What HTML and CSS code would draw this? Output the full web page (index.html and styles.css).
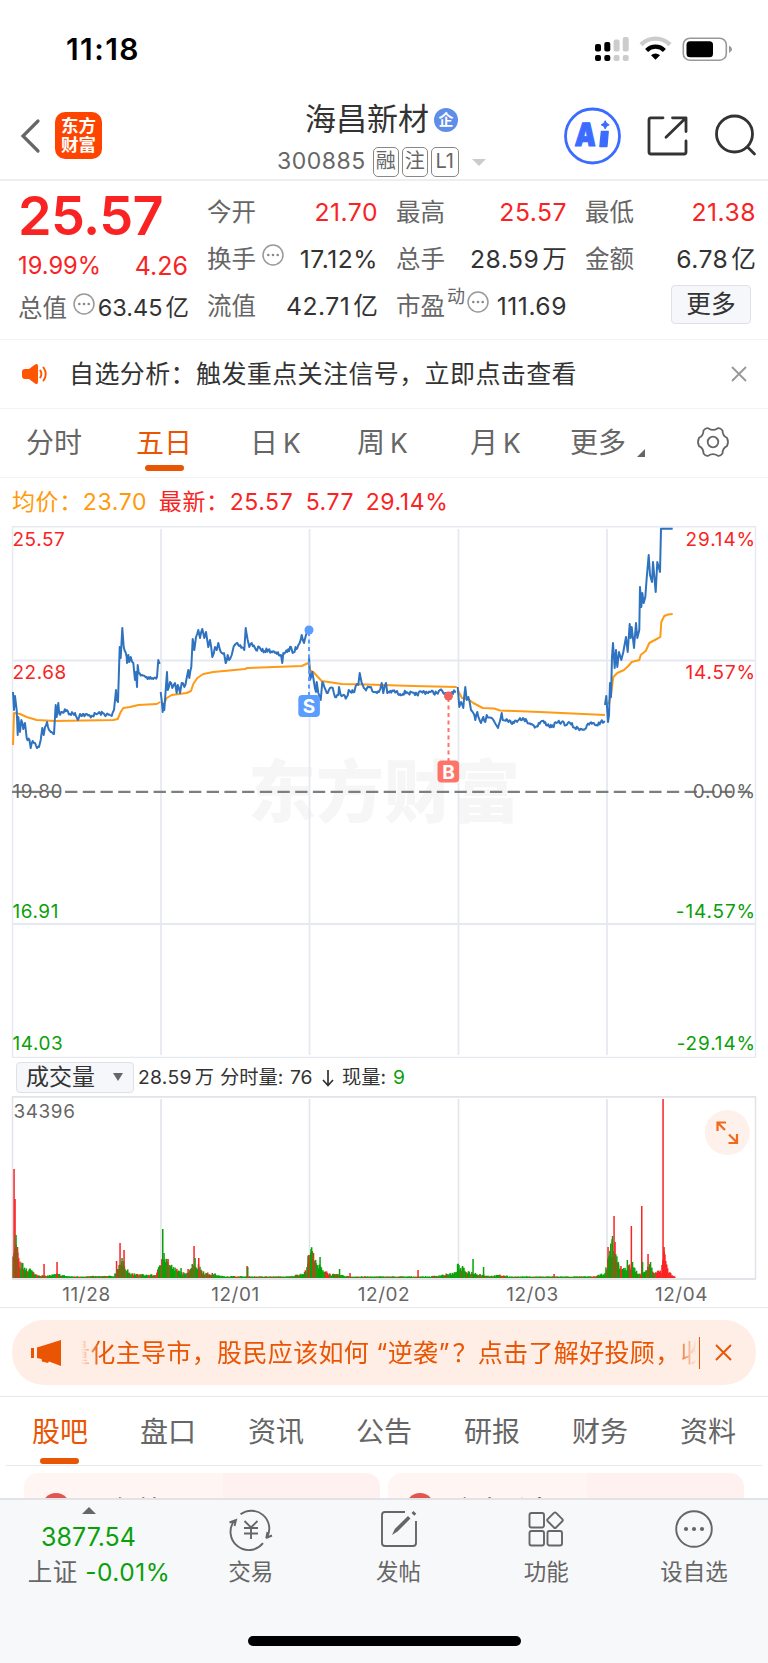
FILE: index.html
```html
<!DOCTYPE html>
<html lang="zh-CN">
<head>
  <meta charset="UTF-8">
  <title>海昌新材 300885</title>
  <link rel="stylesheet" href="styles.css">
</head>
<body>

  <div class="status">
    <span class="time">11:18</span>
    <svg class="status-icons" width="140" height="30" viewBox="0 0 140 30">
      <g fill="#000">
        <rect x="0" y="9" width="6" height="7.5" rx="2"/>
        <rect x="9.3" y="7" width="6" height="9.5" rx="2"/>
        <rect x="0" y="20" width="6" height="6" rx="2"/>
        <rect x="9.3" y="20" width="6" height="6" rx="2"/>
      </g>
      <g fill="#ccc">
        <rect x="18.6" y="4.5" width="6" height="12" rx="2"/>
        <rect x="27.7" y="2" width="6" height="14.5" rx="2"/>
        <rect x="18.6" y="20" width="6" height="6" rx="2"/>
        <rect x="27.7" y="20" width="6" height="6" rx="2"/>
      </g>
      <path d="M46 9.6 A20.5 20.5 0 0 1 75 9.6" fill="none" stroke="#ccc" stroke-width="4.4"/>
      <path d="M51.6 15.4 A12.6 12.6 0 0 1 69.4 15.4" fill="none" stroke="#000" stroke-width="4.2"/>
      <path d="M60.5 24.8 L56 20.2 A6.6 6.6 0 0 1 65 20.2 Z" fill="#000"/>
      <rect x="88.3" y="3.2" width="43" height="22" rx="6.5" fill="none" stroke="#999" stroke-width="1.6"/>
      <rect x="91.5" y="6.2" width="26.5" height="16" rx="3.5" fill="#000"/>
      <path d="M134 10.5 Q137 12 137 14.3 Q137 16.6 134 18 Z" fill="#999"/>
    </svg>
  </div>

  <header class="header">
    <svg class="back" width="22" height="36" viewBox="0 0 22 36"><path d="M18 3 L3 18 L18 33" fill="none" stroke="#666" stroke-width="3.2" stroke-linecap="round"/></svg>
    <div class="logo">东方<br>财富</div>
    <div class="stock">
      <div class="stock-name">海昌新材<span class="badge">企</span></div>
      <div class="stock-code">300885<span class="tag first">融</span><span class="tag">注</span><span class="tag l1">L1</span><i class="drop"></i></div>
    </div>
    <svg class="header-icons" width="194" height="58" viewBox="0 0 194 58">
      <circle cx="28.5" cy="29" r="27" fill="none" stroke="#3b6cff" stroke-width="2.8"/>
      <text class="ai" x="12.5" y="38.8" textLength="21" lengthAdjust="spacingAndGlyphs" transform="skewX(-3)">A</text>
      <path d="M37.4 24.5 h6.8 l-1.3 15 h-7 z" fill="#3b6cff" stroke="#3b6cff" stroke-width="1.4" stroke-linejoin="round"/>
      <path d="M41.2 13.7 Q42 17 45.2 17.8 Q42 18.6 41.2 21.9 Q40.4 18.6 37.2 17.8 Q40.4 17 41.2 13.7 Z" fill="#3b6cff" stroke="#3b6cff"/>
      <g fill="none" stroke="#333" stroke-width="2.8" stroke-linecap="round" stroke-linejoin="round">
        <path d="M99 10.8 H87 Q85 10.8 85 12.8 V45 Q85 47 87 47 H120 Q122 47 122 45 V34"/>
        <path d="M108.5 10.8 H122 V24.5 M121.5 11.3 L102 30.3"/>
        <circle cx="170.5" cy="27" r="18"/>
        <path d="M183.500 40 L190.500 47"/>
      </g>
    </svg>
  </header>

  <section class="quote">
    <div class="quote-main">
      <div class="price">25.57</div>
      <div class="change"><span>19.99%</span><span class="diff">4.26</span></div>
      <div class="cell total"><label>总值</label><svg class="tip" width="22" height="22" viewBox="0 0 22 22"><use href="#tip"/></svg><b>63.45<u>亿</u></b></div>
    </div>
    <div class="quote-col">
      <div class="cell"><label>今开</label><b class="up">21.70</b></div>
      <div class="cell"><label>换手</label><svg class="tip" width="22" height="22" viewBox="0 0 22 22"><use href="#tip"/></svg><b>17.12%</b></div>
      <div class="cell"><label>流值</label><b>42.71<u>亿</u></b></div>
    </div>
    <div class="quote-col">
      <div class="cell"><label>最高</label><b class="up">25.57</b></div>
      <div class="cell"><label>总手</label><b>28.59<u>万</u></b></div>
      <div class="cell"><label>市盈</label><sup>动</sup><svg class="tip near" width="22" height="22" viewBox="0 0 22 22"><use href="#tip"/></svg><b>111.69</b></div>
    </div>
    <div class="quote-col">
      <div class="cell"><label>最低</label><b class="up">21.38</b></div>
      <div class="cell"><label>金额</label><b>6.78<u>亿</u></b></div>
      <div class="cell"><button class="more">更多</button></div>
    </div>
  </section>

  <svg class="defs" width="0" height="0">
    <symbol id="tip" viewBox="0 0 22 22">
      <circle cx="11" cy="11" r="10" fill="none" stroke="#999" stroke-width="1.5"/>
      <circle cx="6.3" cy="11" r="1.3" fill="#888"/><circle cx="11" cy="11" r="1.3" fill="#888"/><circle cx="15.7" cy="11" r="1.3" fill="#888"/>
    </symbol>
  </svg>

  <div class="notice">
    <svg width="26" height="22" viewBox="0 0 26 22">
      <path d="M3 6 H7 L13 1.5 Q16 0 16 3 V19 Q16 22 13 20.5 L7 16 H3 Q0 16 0 13 V9 Q0 6 3 6 Z" fill="#ff5500"/>
      <path d="M18.3 7.5 Q20.5 11 18.3 14.5 M21.5 4.5 Q26 11 21.5 17.5" fill="none" stroke="#ff5500" stroke-width="1.9" stroke-linecap="round"/>
    </svg>
    <p>自选分析：触发重点关注信号，立即点击查看</p>
    <svg width="16" height="16" viewBox="0 0 16 16"><path d="M1 1 L15 15 M15 1 L1 15" stroke="#999" stroke-width="1.9"/></svg>
  </div>

  <nav class="periods">
    <span>分时</span>
    <span class="active">五日</span>
    <span>日<em>K</em></span>
    <span>周<em>K</em></span>
    <span>月<em>K</em></span>
    <span>更多</span>
    <svg class="corner" width="8" height="8" viewBox="0 0 8 8"><path d="M8 0 V8 H0 Z" fill="#666"/></svg>
    <svg class="gear" width="34" height="32" viewBox="-17 -16 34 32" fill="none" stroke="#666" stroke-width="1.8" stroke-linejoin="round">
      <path d="M-9.5 -11.5 Q-7 -14.8 -4.5 -13.6 Q0 -10.8 4.5 -13.6 Q7 -14.8 9.5 -11.5 Q9.6 -6 14 -4.2 Q16 0 14 4.2 Q9.6 6 9.5 11.5 Q7 14.8 4.5 13.6 Q0 10.8 -4.5 13.6 Q-7 14.8 -9.5 11.5 Q-9.6 6 -14 4.2 Q-16 0 -14 -4.2 Q-9.6 -6 -9.5 -11.5 Z"/>
      <circle r="5.3"/>
    </svg>
  </nav>

  <div class="info">
    <span class="avg">均价：</span><span class="avg n1">23.70</span><span>最新：</span><span class="n2">25.57</span><span class="n3">5.77</span><span>29.14%</span>
  </div>

  <svg class="chart" width="768" height="532" viewBox="0 0 768 532">
    <text class="watermark" x="248" y="291" textLength="272">东方财富</text>
    <g fill="none" stroke="#e6e9f0" stroke-width="1.8">
      <path d="M12.5 0.8 H755.5 V531.5 H12.5 Z" stroke-width="1.5"/>
      <path d="M13 134.5 H755 M13 398 H755 M161 3 V529 M309.5 3 V529 M458.5 3 V529 M607 3 V529"/>
    </g>
    <path d="M12 265.8 H755" stroke="#7c807c" stroke-width="2.2" stroke-dasharray="12.3 5.4"/>
    <g class="lines" id="lines"></g>
    <path d="M309 106 V170" stroke="#5a9dff" stroke-width="2" stroke-dasharray="4 3.5"/>
    <circle cx="309" cy="104" r="4.5" fill="#5a9dff"/>
    <rect x="298.3" y="169" width="21.6" height="22" rx="4" fill="#5a9dff"/>
    <text class="mark" x="309.1" y="187">S</text>
    <path d="M448.5 172 V235" stroke="#ff7468" stroke-width="2" stroke-dasharray="4 3.5"/>
    <circle cx="448.5" cy="170" r="4.5" fill="#f2625c"/>
    <rect x="437.5" y="234.5" width="21.6" height="22" rx="4" fill="#ff7468"/>
    <text class="mark" x="448.5" y="252.5">B</text>
    <g class="axis">
      <text class="up" x="12.5" y="20">25.57</text>
      <text class="up" x="12.5" y="152.5">22.68</text>
      <text x="12.5" y="272">19.80</text>
      <text class="down" x="12.5" y="392">16.91</text>
      <text class="down" x="12.5" y="524">14.03</text>
      <g class="right" text-anchor="end">
        <text class="up" x="756" y="20">29.14%</text>
        <text class="up" x="756" y="152.5">14.57%</text>
        <text x="756" y="272">0.00%</text>
        <text class="down" x="756" y="392">-14.57%</text>
        <text class="down" x="756" y="524">-29.14%</text>
      </g>
    </g>
  </svg>

  <div class="volume-info">
    <div class="select">成交量<i></i></div>
    <span class="v1">28.59<u>万</u></span><span class="v2">分时量:</span><span class="v3">76</span>
    <svg width="12" height="18" viewBox="0 0 12 18"><path d="M6 1 V16 M1 11 L6 16.5 L11 11" fill="none" stroke="#333" stroke-width="1.7"/></svg>
    <span class="v4">现量:</span><span class="down">9</span>
  </div>

  <svg class="volume" width="768" height="211" viewBox="0 0 768 211">
    <g fill="none" stroke="#e2e4ea" stroke-width="1.6">
      <path d="M12.5 0 V183 M755.5 0 V183 M161 3 V183 M309.5 3 V183 M458.5 3 V183 M607 3 V183"/>
      <path d="M12 0.8 H756 M12 183 H756" stroke-width="2"/>
    </g>
    <g id="bars"></g>
    <circle cx="727.3" cy="36.5" r="22.5" fill="#fef0ea"/>
    <path d="M717.5 35 V26.5 H726 M718 27 L725 34 M729 38.5 L736.5 46 M728.5 47 H737 V38" fill="none" stroke="#f06a1e" stroke-width="2.2"/>
    <g class="axis">
      <text x="13.5" y="21.5">34396</text>
      <g text-anchor="middle">
        <text x="86.5" y="204.5">11/28</text>
        <text x="235.5" y="204.5">12/01</text>
        <text x="384" y="204.5">12/02</text>
        <text x="532.5" y="204.5">12/03</text>
        <text x="681.5" y="204.5">12/04</text>
      </g>
    </g>
  </svg>

  <div class="banner-wrap">
    <div class="banner">
      <svg width="30" height="26" viewBox="0 0 30 26"><path d="M0 8 H3 V18 H0 Z M6 7.5 L30 0 V26 L18 21.5 L17 23 L11 21.5 L10.5 19 L6 18 Z" fill="#ea5504"/></svg>
      <div class="marquee"><p>量化主导市，股民应该如何<q class="open">“</q>逆袭<q>”</q>？点击了解好投顾，收益</p></div>
      <svg class="close" width="17" height="17" viewBox="0 0 17 17"><path d="M1 1 L16 16 M16 1 L1 16" stroke="#ea5504" stroke-width="1.9"/></svg>
    </div>
  </div>

  <nav class="tabs">
    <span class="active">股吧</span><span>盘口</span><span>资讯</span><span>公告</span><span>研报</span><span>财务</span><span>资料</span>
  </nav>

  <div class="cards">
    <div class="card"><i class="dot"></i><b>人气榜</b></div>
    <div class="card"><i class="dot"></i><b>今十看盘</b></div>
  </div>

  <footer class="bottom">
    <div class="index">
      <svg width="14" height="7" viewBox="0 0 14 7"><path d="M7 0 L14 7 H0 Z" fill="#666"/></svg>
      <div class="index-value">3877.54</div>
      <div class="index-name">上证 <span class="down">-0.01%</span></div>
    </div>
    <div class="item">
      <svg width="44" height="40" viewBox="-22 -20 44 40" fill="none" stroke="#666" stroke-width="1.9">
        <path d="M-10.5 -14.7 A18 18 0 0 1 16 8.5 M15.2 9.2 L16.5 3 M15 9 L21 6.5 M12 14.2 A18 18 0 0 1 -16.5 -8.5 M-21.5 -6.5 L-15 -9 L-16.5 -3"/>
        <path d="M-6.5 -8 L0 -1.5 L6.5 -8 M0 -1.5 V10 M-7 -1 H7 M-7 4.5 H7"/>
      </svg>
      交易
    </div>
    <div class="item">
      <svg width="44" height="40" viewBox="-22 -20 44 40" fill="none" stroke="#666" stroke-width="1.9">
        <path d="M6 -17 H-14 Q-17 -17 -17 -14 V14 Q-17 17 -14 17 H14 Q17 17 17 14 V-8"/>
        <path d="M-7 6 L-4.2 0 L9 -13 L11.5 -10.5 L-1.5 2.5 Z M12.5 -16 L14.5 -18 L17.3 -15.3 L15.3 -13.3 Z" fill="#666" stroke="none"/>
      </svg>
      发帖
    </div>
    <div class="item">
      <svg width="44" height="40" viewBox="-22 -20 44 40" fill="none" stroke="#666" stroke-width="1.9">
        <rect x="-16.5" y="-16" width="14.5" height="14.5" rx="2"/>
        <rect x="-16.5" y="2" width="14.5" height="14.5" rx="2"/>
        <rect x="1.5" y="2" width="14.5" height="14.5" rx="2"/>
        <rect x="3.1" y="-14.7" width="11.8" height="11.8" rx="1.5" transform="rotate(45 9 -8.8)"/>
      </svg>
      功能
    </div>
    <div class="item">
      <svg width="44" height="40" viewBox="-22 -20 44 40" fill="none" stroke="#666" stroke-width="1.9">
        <circle r="17.8"/>
        <g fill="#666" stroke="none"><circle cx="-8" r="2.1"/><circle r="2.1"/><circle cx="8" r="2.1"/></g>
      </svg>
      设自选
    </div>
    <div class="home"></div>
  </footer>

  <script src="chart.js"></script>
</body>
</html>
```
FILE: styles.css
```css
* {
  box-sizing: border-box;
}

body {
  margin: 0;
  width: 768px;
  height: 1663px;
  overflow: hidden;
  background-color: #fff;
  color: #333;
  font-family: Inter, "Noto Sans CJK SC", sans-serif;
  line-height: 1.3;
  display: flex;
  flex-direction: column;
}

body > * {
  flex: none;
}

svg {
  display: block;
  flex: none;
}

i, em {
  font-style: normal;
}

u {
  text-decoration: none;
}

.defs {
  height: 0;
}

.up {
  color: #fa2323;
  fill: #fa2323;
}

.down {
  color: #0aa00a;
  fill: #0aa00a;
}

/* status bar */
.status {
  height: 98px;
  padding: 1px 33px 0 66px;
  display: flex;
  justify-content: space-between;
  align-items: center;
}

.time {
  font-size: 30px;
  font-weight: 600;
  color: #000;
  letter-spacing: 1.4px;
}

.status-icons {
  margin-top: 1px;
}

/* header */
.header {
  height: 83px;
  border-bottom: 2px solid #eee;
  display: flex;
  padding-left: 20px;
}

.back {
  margin-top: 20px;
}

.logo {
  width: 47px;
  height: 47px;
  margin: 14px 0 0 13px;
  padding-top: 4px;
  border-radius: 10px;
  background-color: #ff4400;
  color: #fff;
  font-size: 17.5px;
  font-weight: 700;
  line-height: 19px;
  text-align: center;
}

.stock {
  width: 240px;
  margin-left: 175px;
}

.stock-name {
  display: flex;
  align-items: center;
  height: 43px;
  padding-left: 28px;
  font-size: 31px;
}

.badge {
  width: 24px;
  height: 24px;
  margin-left: 5px;
  border-radius: 50%;
  background-color: #5f8dea;
  color: #fff;
  font-size: 15px;
  font-weight: 700;
  line-height: 23px;
  text-align: center;
}

.stock-code {
  display: flex;
  align-items: center;
  height: 40px;
  margin-top: 1px;
  color: #666;
  font-size: 23px;
  letter-spacing: 0.5px;
}

.tag {
  width: 26px;
  height: 30px;
  margin-left: 3px;
  border: 1.5px solid #888;
  border-radius: 5px;
  font-size: 20px;
  line-height: 27px;
  letter-spacing: 0;
  text-align: center;
}

.tag.first {
  margin-left: 7px;
}

.tag.l1 {
  width: 28px;
}

.drop {
  margin-left: 13px;
  border: 7px solid transparent;
  border-top-color: #ccc;
  border-bottom: 0;
}

.header-icons {
  margin: 9px 0 0 47px;
}

.ai {
  fill: #3b6cff;
  stroke: #3b6cff;
  stroke-width: 1.2;
  stroke-linejoin: round;
  font-size: 32px;
  font-weight: 900;
}

/* quote */
.quote {
  display: grid;
  grid-template-columns: repeat(4, 170px);
  column-gap: 19px;
  height: 159px;
  padding: 7px 0 0 18px;
  border-bottom: 1.5px solid #f3f3f3;
}

.quote-col {
  padding-top: 1px;
}

.price {
  height: 54px;
  line-height: 55px;
  color: #fa2323;
  font-size: 54px;
  font-weight: 600;
  letter-spacing: -0.6px;
}

.change {
  display: flex;
  justify-content: space-between;
  height: 48px;
  line-height: 48px;
  color: #fa2323;
  font-size: 23.7px;
}

.diff {
  font-size: 25px;
}

.cell {
  display: flex;
  align-items: center;
  height: 47px;
  font-size: 24.7px;
  white-space: nowrap;
}

.cell.total {
  height: 37px;
}

.cell label {
  color: #666;
  font-size: 24.5px;
}

.cell b {
  margin-left: auto;
  margin-right: -1px;
  font-weight: 400;
  letter-spacing: 0.5px;
}

.cell.total b {
  font-size: 23.5px;
  letter-spacing: 0;
}

.cell u {
  margin-left: 3px;
  letter-spacing: 0;
}

.cell sup {
  margin: -20px 0 0 2px;
  font-size: 18px;
  color: #666;
}

.tip {
  margin: -10px 0 0 6px;
}

.tip.near {
  margin-left: 2px;
}

.more {
  width: 80px;
  height: 39px;
  margin: -4px 4px 0 auto;
  padding: 0;
  border: 1.5px solid #dfe1e6;
  border-radius: 4px;
  background-color: #f6f7fa;
  color: #333;
  font: inherit;
}

/* notice */
.notice {
  display: flex;
  align-items: center;
  height: 69px;
  padding: 0 21px 0 22px;
  border-bottom: 1.5px solid #f3f3f3;
}

.notice p {
  flex: 1;
  margin: 0 0 0 21px;
  font-size: 25px;
  letter-spacing: 0.4px;
}

/* period tabs */
.periods {
  display: grid;
  grid-template-columns: 110px 114px 107px 113px 100px 94px 77px 34px;
  height: 69px;
  padding-left: 26px;
  border-bottom: 1.5px solid #f3f3f3;
  color: #666;
  font-size: 28px;
  line-height: 68px;
}

.periods em {
  margin-left: 5px;
  font-size: 26.5px;
}

.periods .active {
  position: relative;
  color: #ea5504;
}

.periods .active::after,
.tabs .active::after {
  content: "";
  position: absolute;
  left: 9px;
  bottom: 6px;
  width: 39px;
  height: 6px;
  border-radius: 3px;
  background-color: #ea5504;
}

.corner {
  margin: 40px 0 0 -27px;
  justify-self: start;
  grid-column: 7;
}

.gear {
  margin: 17px 0 0 -45px;
}

/* average / latest */
.info {
  display: flex;
  align-items: center;
  height: 48px;
  padding: 2px 0 0 12px;
  color: #fa2323;
  font-size: 23px;
  letter-spacing: 0.6px;
}

.info .avg {
  color: #ff9a0a;
}

.n1 { width: 76px; }
.n2 { width: 76px; }
.n3 { width: 60px; }

/* charts */
.axis text {
  font-size: 18.9px;
  letter-spacing: 0.6px;
}

.axis .right text {
  letter-spacing: 0.9px;
}

.axis text:not(.up):not(.down) {
  fill: #666;
}

.lines path {
  fill: none;
  stroke: #2f72bf;
  stroke-width: 2;
  stroke-linejoin: round;
}

.lines path.avg {
  stroke: #ff9a16;
}

.watermark {
  fill: #f6f6f6;
  font-size: 68px;
  font-weight: 900;
}

.mark {
  fill: #fff;
  font-size: 19px;
  font-weight: 700;
  text-anchor: middle;
}

.volume-info {
  display: flex;
  align-items: center;
  height: 38px;
  padding: 1px 0 0 16px;
  font-size: 19.3px;
  white-space: nowrap;
}

.volume-info svg {
  margin-right: 8px;
}

.select {
  display: flex;
  align-items: center;
  width: 118px;
  height: 31px;
  margin: -1px 4px 0 0;
  padding: 1px 0 0 9px;
  border: 1.5px solid #dfe1e6;
  border-radius: 4px;
  background-color: #f6f7fa;
  font-size: 23px;
}

.select i {
  margin: -1px 0 0 18px;
  border: 5px solid transparent;
  border-top: 8px solid #666;
  border-bottom: 0;
}

.v1 { width: 82px; letter-spacing: 0.3px; }
.v1 u { margin-left: 3px; }
.v2 { width: 70px; }
.v3 { width: 32px; }
.v4 { width: 51px; }

/* banner */
.banner-wrap {
  height: 90px;
  padding: 12px 12px 0;
  border-top: 1.5px solid #e8e8ec;
  border-bottom: 1.5px solid #e8e8ec;
}

.banner {
  display: flex;
  align-items: center;
  height: 65px;
  padding: 0 24px 0 19px;
  border-radius: 32px;
  background-color: #feeee6;
  color: #ea5504;
}

.marquee {
  width: 619px;
  height: 32px;
  margin-left: 20px;
  border-right: 1.5px solid #ea5504;
}

.marquee p {
  width: 616px;
  margin: 0;
  overflow: hidden;
  white-space: nowrap;
  text-indent: -16px;
  font-size: 25px;
  line-height: 32px;
  letter-spacing: 0.35px;
  -webkit-mask-image: linear-gradient(90deg, transparent, #000 18px, #000 594px, transparent);
  mask-image: linear-gradient(90deg, transparent, #000 18px, #000 594px, transparent);
}

.marquee q {
  quotes: none;
  display: inline-block;
  width: 14px;
  text-indent: 0;
}

.marquee .open {
  width: 18.5px;
  text-align: right;
}

.close {
  margin-left: auto;
}

/* content tabs */
.tabs {
  display: flex;
  height: 69px;
  margin: 0 6px;
  padding-left: 26px;
  border-bottom: 1.5px solid #eaeaea;
  color: #666;
  font-size: 28px;
  line-height: 71px;
}

.tabs span {
  position: relative;
  width: 108px;
  flex: none;
}

.tabs .active {
  color: #ea5504;
}

.tabs .active::after {
  left: 8px;
  bottom: 1px;
}

.cards {
  display: flex;
  gap: 8px;
  height: 32px;
  padding: 7px 24px 0;
  overflow: hidden;
}

.card {
  display: flex;
  width: 356px;
  height: 80px;
  padding: 18px 18px;
  border-radius: 14px;
  background: linear-gradient(90deg, #fff6f4 56%, #fef1ef 56%);
  color: #222;
}

.dot {
  width: 28px;
  height: 28px;
  margin-top: 2px;
  border-radius: 50%;
  background-color: #e0574f;
}

.card b {
  margin-left: 18px;
  font-size: 25px;
  font-weight: 500;
  line-height: 38px;
}

/* bottom bar */
.bottom {
  display: flex;
  flex-wrap: wrap;
  align-content: flex-start;
  height: 166px;
  border-top: 2px solid #e2e3e6;
  background-color: #f7f8fa;
  color: #666;
}

.index {
  width: 177px;
  height: 136px;
  padding-top: 7px;
  display: flex;
  flex-direction: column;
  align-items: center;
}

.index-value {
  margin-top: 6px;
  color: #0aa00a;
  font-size: 25px;
  line-height: 34px;
}

.index-name {
  margin-left: 21px;
  font-size: 24.5px;
  line-height: 36px;
  letter-spacing: 0.5px;
  white-space: nowrap;
}

.item {
  width: 147.7px;
  padding-top: 9px;
  text-align: center;
  font-size: 22.5px;
  line-height: 36px;
}

.item svg {
  margin: 0 auto 5px;
  overflow: visible;
}

.home {
  width: 273px;
  height: 10px;
  margin: 0 auto;
  border-radius: 5px;
  background-color: #000;
}
```
FILE: chart.js
```js
// price per day, [x, y, x, y, ...]
const price = [
  [13,166,14,184,15,170,16.7,184,17.7,209,18.3,191,20,206,21.3,194,23.3,203,25,197,26.7,212,29.5,214,30.7,222,32.7,215,35,217,37,222,39,221,40.7,214,42.3,202,43.7,209,45,201,47,196,49,204,51.7,206,54,208,55.7,179,56.7,191,58.3,177,59.3,188,66.7,184,70,188,75,187,78,194,80,188,90,190,100,187,111.7,190,114,184,116,164,116.7,174,118,176,119.7,121,120.7,132,122.3,102,123.7,121,126.7,131,127,137,128.3,129,129.3,136,130.7,131,133.3,137,135,154,136,146,137,161,137.7,139,138.7,147,146.7,151,153.3,153,157,151,158.3,134,160.3,137],
  [160.7,166,162.7,186,163.5,178,164.3,184,165.7,164,167,146,167.7,164,170,156,172.3,162,175,157,176.7,167,177.7,159,180,167,181.7,157,184.3,161,186.7,152,188.3,144,189.3,152,191.3,141,192.7,113,194.3,124,196,111,198.3,104,200,112,202.3,103,204.3,112,206,106,208.3,121,210,114,212.3,131,215,121,216.7,124,218.3,117,220,124,224,127,225.7,137,227.7,129,229,134,231.7,129,234.7,119,238.3,119,243.3,122,244.3,124,245.7,102,247.7,114,249.3,121,251.7,117,256,124,259.3,121,261.7,125,268.3,124,275,127,281,129,282.3,137,283.3,127,287.3,126,291,121,292.7,127,298.3,119,301.7,109,304,117,306,109,308.3,104],
  [309,130,310,154,312.3,146,314,156,316,166,316.7,156,318.3,167,320.7,174,322.3,156,324.3,161,326.7,167,330,162,332.7,162,335,171,338.3,169,339,161,340.7,169,346.7,171,348.7,164,354.3,166,355.7,160,358.3,159,359.7,147,361.7,157,365,163,370,161,373.3,166,379,166,381.7,157,383.3,167,386,157,387.3,167,393.3,165,400,168,406.7,166,415,169,421.7,166,430,166,436.7,167,440,164,443.3,167,448.3,170,452,166,456,166],
  [457.7,161,459.3,181,461,176,463.3,182,465.3,161,466.7,174,468.3,171,471,184,473.3,187,475.3,194,477.3,186,481,197,483.3,191,485.3,196,486.7,189,491.7,192,495,197,498,202,501.7,187,502.7,194,506.7,193,514,197,520,192,526.7,195,531.7,198,535.7,201,541.7,195,551.7,201,556.7,197,561.7,196,566.7,199,570,197,575,202,585,203,590,197,596.7,199,600.7,196,605,196],
  [605,179,606.3,170,608,196,609,189,610,157,611,171,612,131,613,117,614.7,142,616,124,617.3,141,619,126,621.3,134,623.3,126,626,111,627.7,126,629.7,98,630.7,112,631.7,101,634,122,636,97,637.3,112,639.3,104,640,61,641.3,81,642.3,67,643.7,77,645.3,71,646.7,52,648.7,29,650,49,652,56,653,36,655.7,66,657.3,36,658.7,41,660,46,661,2.7,672.7,2.7]
];

const average = [
  [13,219,14,187,20,188,26.7,191,36.7,194,55,195,113.3,194,117.7,193,120.7,186,123.3,182,130,181,138.3,179,156.7,178,160.3,176],
  [163,180,166.7,172,171.7,169,186.7,167,191,165,193.3,158,197.3,152,203.3,148,213.3,146,245,143,247.3,142,301.7,140,308.3,137],
  [309,137,310,144,313.3,146,321.7,155,341.7,158,366.7,158.5,413.3,160,456.7,161],
  [457.7,164,462,172,468,173,473.3,177,482.7,182,494.3,182.5,500,184.5,540,186,605,189],
  [606,178,609,177,611,169,613.3,151,617.3,147,624,144,628.3,140,631.7,136,639.3,134,640.7,129,645.7,125,649.3,117,656.7,113,660.3,111,661.3,96,664.3,90,668,88.5,672.7,88]
];

let seed = 7;
function rand() {
  seed = (seed * 16807) % 2147483647;
  return seed / 2147483647;
}

// adds the small minute ticks between two points
function buildPath(p, amp) {
  let d = `M${p[0]} ${p[1]}`;
  for (let i = 2; i < p.length; i += 2) {
    const dx = p[i] - p[i - 2];
    const steps = amp ? Math.floor(dx / 0.9) : 0;
    for (let s = 1; s < steps; s++) {
      const t = s / steps;
      const y = p[i - 1] + (p[i + 1] - p[i - 1]) * t + (rand() - 0.5) * amp;
      d += `L${(p[i - 2] + dx * t).toFixed(1)} ${y.toFixed(1)}`;
    }
    d += `L${p[i]} ${p[i + 1]}`;
  }
  return d;
}

document.getElementById("lines").innerHTML =
  average.map(p => `<path class="avg" d="${buildPath(p, 0)}"/>`).join("") +
  price.map((p, i) => `<path d="${buildPath(p, i === 4 ? 0 : 4)}"/>`).join("");

// volume: general level, then the single peaks
const level = [13,20,16,30,20,14,30,9,35,4,45,2,57,4,70,1.5,114,2,119,15,125,14,130,4,155,3,160,12,163,28,168,15,175,9,185,4,193,14,199,12,205,5,215,4,220,2,250,1.5,290,1.5,300,4,306,7,308,20,312,28,316,14,322,10,330,4,340,3,350,1.5,430,1.5,455,5,458,12,463,9,470,6,480,4,490,2,500,3,510,1.5,595,1.5,605,5,608,18,612,35,615,22,620,12,625,9,632,14,638,4,646,9,650,13,654,4,661,8,664,26,668,8,672,3,675,1];
const peaks = [
  [14,109,1],[15,79,1],[16,43,0],[17.5,31,1],[44,14,1],[57,16,1],[116.5,17,1],[120,35,1],[122,20,0],[124,28,1],
  [162.7,49,0],[164,25,0],[168,19,1],[181,10,0],[188,9,1],[194,32,1],[195,20,0],[198.7,20,1],[247,12,1],[247.7,11,0],
  [308.5,23,1],[311,29,0],[312.3,27,0],[313.5,25,1],[320,21,0],[339.5,9,0],[350,5,1],[418,8,1],[457.5,14,0],[462.5,12,0],
  [473,19,0],[483.5,11,0],[554,4,1],[608,31,1],[609,22,0],[612.5,42,0],[614,62,1],[615,36,1],[615.7,24,0],[618.3,16,0],
  [627.3,18,0],[631.3,52,1],[632.5,16,0],[641.7,72,1],[642.5,16,0],[648,24,1],[650.5,16,0],[663,179,1],[664,31,1],[665.7,17,1]
];

function bar(x, h, red) {
  return `<rect x="${(x - 0.7).toFixed(1)}" y="${(182 - h).toFixed(1)}" width="1.5" height="${h.toFixed(1)}" fill="${red ? "#fa2323" : "#0aa00a"}"/>`;
}

let bars = "";
for (let i = 2; i < level.length; i += 2) {
  for (let x = level[i - 2]; x < level[i]; x += 0.9) {
    const t = (x - level[i - 2]) / (level[i] - level[i - 2]);
    const h = level[i - 1] + (level[i + 1] - level[i - 1]) * t;
    bars += bar(x, Math.max(1.2, h * (0.6 + rand() * 0.6)), x > 655 || rand() < 0.22);
  }
}
document.getElementById("bars").innerHTML = bars + peaks.map(p => bar(...p)).join("");
```
